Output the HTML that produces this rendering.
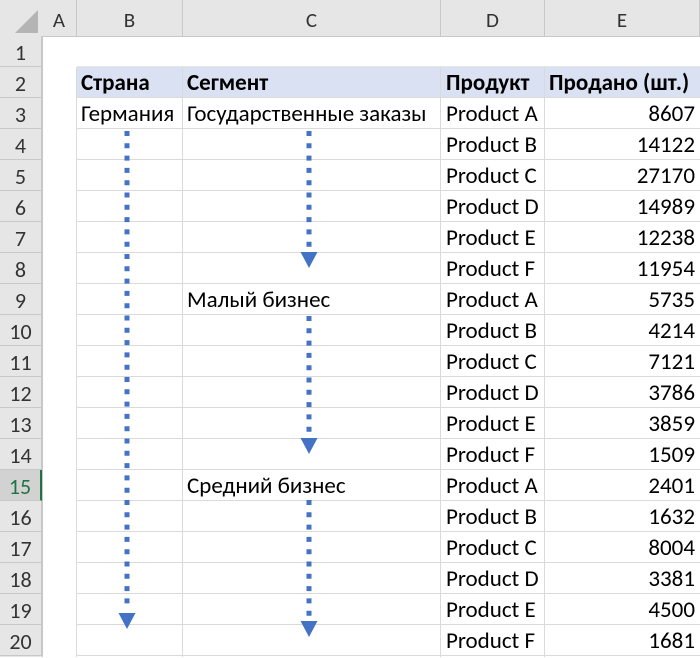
<!DOCTYPE html>
<html><head><meta charset="utf-8"><style>
body{margin:0;width:700px;height:657px;overflow:hidden;background:#fff;font-family:"Calibri","Carlito","Liberation Sans",sans-serif;}
.c{position:absolute;box-sizing:border-box;font-size:23px;line-height:32px;white-space:nowrap;color:#000;}
.hd{background:#e6e6e6;color:#333;text-align:center;}
</style></head><body>
<div style="position:absolute;left:0;top:0;width:700px;height:36px;background:#e6e6e6;border-bottom:1px solid #c8c8c8"></div>
<div style="position:absolute;left:0;top:0;width:42px;height:657px;background:#e6e6e6;border-right:1px solid #c8c8c8"></div>
<svg style="position:absolute;left:0;top:0" width="42" height="36"><polygon points="38,10 38,33 15,33" fill="#b4b4b4"/></svg>
<div id="g"></div>
<svg style="position:absolute;left:0;top:0" width="700" height="657" id="s"></svg>
<script>
var cols=[[42,77,'A'],[77,183,'B'],[183,441,'C'],[441,545,'D'],[545,700,'E']];
var h='';
cols.forEach(function(c){h+='<div class="c hd" style="left:'+c[0]+'px;top:0;width:'+(c[1]-c[0])+'px;height:36px;line-height:40px;font-size:21px;border-right:1px solid #c8c8c8">'+c[2]+'</div>';});
for(var r=1;r<=20;r++){var y=36+(r-1)*31;
h+='<div class="c hd" style="left:0;top:'+y+'px;width:42px;height:31px;font-size:22px;line-height:33px;border-bottom:1px solid #c8c8c8;'+(r==15?'background:#d2d2d2;color:#217346;border-right:2px solid #217346;':'border-right:1px solid #c8c8c8;')+'">'+r+'</div>';}
h+='<div style="position:absolute;left:77px;top:67px;width:623px;height:31px;background:#d9e1f2"></div>';
for(var r=2;r<=21;r++){var y=67+(r-2)*31;h+='<div style="position:absolute;left:77px;top:'+(y-1)+'px;width:623px;height:1px;background:'+(r==2?'#e6e6e6':'#dadada')+'"></div>';}
[77,183,441,545].forEach(function(x){h+='<div style="position:absolute;left:'+(x-1)+'px;top:67px;width:1px;height:590px;background:#dadada"></div>';});
function t(x,r,s,st){h+='<div class="c" style="left:'+x+'px;top:'+(67+(r-2)*31)+'px;'+(st||'')+'">'+s+'</div>';}
t(81,2,'Страна','font-weight:bold');t(187,2,'Сегмент','font-weight:bold');t(446,2,'Продукт','font-weight:bold');t(549,2,'Продано (шт.)','font-weight:bold');
t(81,3,'Германия');t(187,3,'Государственные заказы');t(187,9,'Малый бизнес');t(187,15,'Средний бизнес');
var v=[8607,14122,27170,14989,12238,11954,5735,4214,7121,3786,3859,1509,2401,1632,8004,3381,4500,1681];
for(var i=0;i<18;i++){t(446,3+i,'Product '+'ABCDEF'[i%6]);h+='<div class="c" style="left:545px;width:150px;text-align:right;top:'+(67+(1+i)*31)+'px">'+v[i]+'</div>';}
document.getElementById('g').innerHTML=h;
var s='';
function ar(x,y1,y2){s+='<line x1="'+x+'" y1="'+y1+'" x2="'+x+'" y2="'+(y2-2)+'" stroke="#4472c4" stroke-width="5" stroke-dasharray="5 7.3"/>';
s+='<polygon points="'+(x-8.5)+','+(y2+1)+' '+(x+8.5)+','+(y2+1)+' '+x+','+(y2+17)+'" fill="#4472c4"/>';}
ar(127,131,612);ar(309,131,251);ar(309,316,437);ar(309,500,620);
document.getElementById('s').innerHTML=s;
</script>
</body></html>
